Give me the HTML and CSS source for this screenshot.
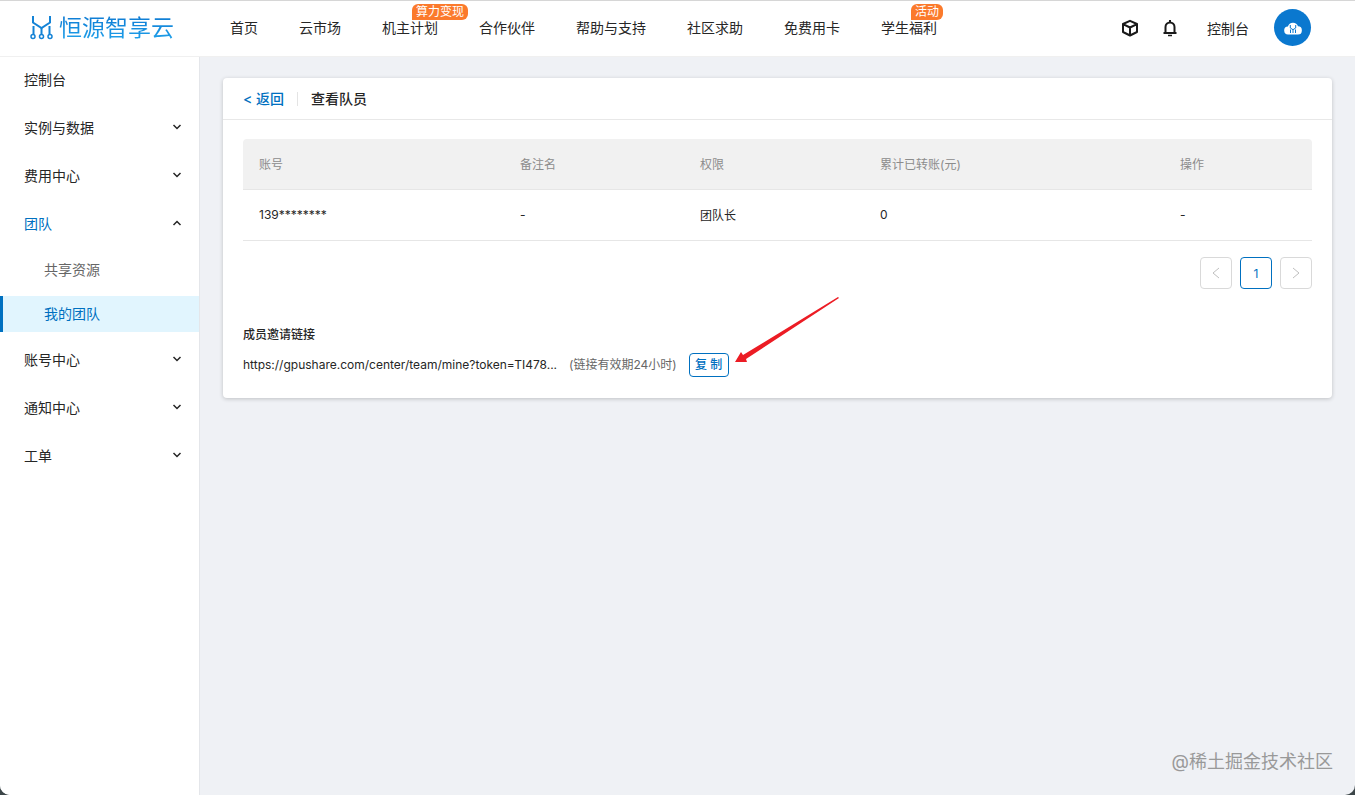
FILE: index.html
```html
<!DOCTYPE html>
<html lang="zh-CN">
<head>
    <meta charset="UTF-8">
    <title>恒源智享云</title>
    <link rel="stylesheet" href="styles.css">
</head>
<body>
<div id="app">
    <header class="header">
        <a class="logo" href="#">
            <svg width="23" height="25" viewBox="0 0 23 25" fill="none" stroke="#1483d6">
                <path d="M3 1v6.500l8.500 5.500L20 7.500V1" stroke-width="2"/>
                <path d="M3.500 11v8.500M19.500 11v8.500M11.500 13v6.500" stroke-width="2"/>
                <circle cx="3" cy="21.500" r="2" stroke-width="1.500" fill="#fff"/>
                <circle cx="11.500" cy="21.500" r="2" stroke-width="1.500" fill="#fff"/>
                <circle cx="20" cy="21.500" r="2" stroke-width="1.500" fill="#fff"/>
            </svg>
            <span>恒源智享云</span>
        </a>
        <nav class="nav">
            <a href="#">首页</a>
            <a href="#">云市场</a>
            <a href="#">机主计划<span class="tag">算力变现</span></a>
            <a href="#">合作伙伴</a>
            <a href="#">帮助与支持</a>
            <a href="#">社区求助</a>
            <a href="#">免费用卡</a>
            <a href="#">学生福利<span class="tag">活动</span></a>
        </nav>
        <div class="tools">
            <button class="icon" aria-label="容器">
                <svg width="18" height="18" viewBox="0 0 18 18" fill="none" stroke="#1a1a1a" stroke-width="2" stroke-linejoin="round">
                    <path d="M9 1.800L16 5v8l-7 3.500L2 13V5zM2.500 5.300L9 8.500l6.500-3.200M9 8.500v7.500"/>
                </svg>
            </button>
            <button class="icon" aria-label="通知">
                <svg width="18" height="18" viewBox="0 0 18 18" fill="none" stroke="#1a1a1a" stroke-width="2">
                    <path d="M4.500 14V8a4.500 4.500 0 0 1 9 0v6M2.500 14h13M9 1v3"/>
                    <path d="M7 16.500h4" stroke-width="1.500"/>
                </svg>
            </button>
            <a class="console" href="#">控制台</a>
            <a class="avatar" href="#" aria-label="用户">
                <svg width="18" height="14" viewBox="0 0 18 14">
                    <path d="M4.500 13.500a4 4 0 0 1-.6-8A5.300 5.300 0 0 1 14 5.300a4.100 4.100 0 0 1-.5 8.200z" fill="#fff"/>
                    <path d="M6.300 4v3L9 8.700 11.700 7V4M9 8.700V12M6.500 8.500V12M11.500 8.500V12" fill="none" stroke="#0a78cf" stroke-width="1"/>
                </svg>
            </a>
        </div>
    </header>
    <div class="body">
        <aside class="side">
            <ul class="menu">
                <li><a href="#">控制台</a></li>
                <li><a href="#">实例与数据<svg class="arr" viewBox="0 0 10 6"><path d="M1.500 1L5 4.500 8.500 1"/></svg></a></li>
                <li><a href="#">费用中心<svg class="arr" viewBox="0 0 10 6"><path d="M1.500 1L5 4.500 8.500 1"/></svg></a></li>
                <li>
                    <a class="open" href="#">团队<svg class="arr" viewBox="0 0 10 6"><path d="M1.500 5L5 1.500 8.500 5"/></svg></a>
                    <ul class="sub">
                        <li><a href="#">共享资源</a></li>
                        <li><a class="selected" href="#">我的团队</a></li>
                    </ul>
                </li>
                <li><a href="#">账号中心<svg class="arr" viewBox="0 0 10 6"><path d="M1.500 1L5 4.500 8.500 1"/></svg></a></li>
                <li><a href="#">通知中心<svg class="arr" viewBox="0 0 10 6"><path d="M1.500 1L5 4.500 8.500 1"/></svg></a></li>
                <li><a href="#">工单<svg class="arr" viewBox="0 0 10 6"><path d="M1.500 1L5 4.500 8.500 1"/></svg></a></li>
            </ul>
        </aside>
        <main class="main">
            <section class="card">
                <div class="card-head">
                    <a href="#">&lt; 返回</a>
                    <h1>查看队员</h1>
                </div>
                <div class="card-body">
                    <table class="table">
                        <colgroup>
                            <col class="c-account">
                            <col class="c-note">
                            <col class="c-role">
                            <col class="c-sum">
                            <col>
                        </colgroup>
                        <thead>
                        <tr>
                            <th>账号</th>
                            <th>备注名</th>
                            <th>权限</th>
                            <th>累计已转账(元)</th>
                            <th>操作</th>
                        </tr>
                        </thead>
                        <tbody>
                        <tr>
                            <td>139********</td>
                            <td>-</td>
                            <td>团队长</td>
                            <td>0</td>
                            <td>-</td>
                        </tr>
                        </tbody>
                    </table>
                    <div class="pager">
                        <button disabled aria-label="上一页"><svg width="10" height="12" viewBox="0 0 10 12"><path d="M8 1L2 6l6 5"/></svg></button>
                        <button class="current">1</button>
                        <button disabled aria-label="下一页"><svg width="10" height="12" viewBox="0 0 10 12"><path d="M2 1l6 5-6 5"/></svg></button>
                    </div>
                    <h2>成员邀请链接</h2>
                    <div class="invite">
                        <span class="url">https://gpushare.com/center/team/mine?token=TI478...</span>
                        <span class="tip">(链接有效期24小时)</span>
                        <div class="copy">
                            <button>复 制</button>
                            <svg class="pointer" width="104" height="66" viewBox="0 0 104 66"><path d="M0 65L6 55l2 3L103 0l1 1L11 62l1 3z" fill="#ec1c24"/></svg>
                        </div>
                    </div>
                </div>
            </section>
        </main>
    </div>
    <div class="mark">@稀土掘金技术社区</div>
</div>
</body>
</html>
```

FILE: styles.css
```css
*{
    margin: 0;
    padding: 0;
    box-sizing: border-box;
}
body{
    background: #3c4648;
    font-family: Inter, "Noto Sans CJK SC", sans-serif;
    font-size: 14px;
    color: #262626;
}
a{
    color: inherit;
    text-decoration: none;
}
ul{
    list-style: none;
}
button{
    font: inherit;
    cursor: pointer;
}
#app{
    position: relative;
    display: flex;
    flex-direction: column;
    min-height: 100vh;
    border-radius: 0 0 10px 10px;
    overflow: hidden;
    background: #eff1f5;
}

/* header */
.header{
    display: flex;
    align-items: center;
    height: 56px;
    padding: 0 44px 2px 30px;
    background: #fff;
    border-top: 1px solid #d6d6d6;
    box-shadow: 0 1px 0 #f0f0f0;
    z-index: 1;
}
.logo{
    display: flex;
    align-items: center;
    gap: 6px;
    width: 200px;
}
.logo span{
    font-size: 23px;
    line-height: 32px;
    background: linear-gradient(#0b74cf, #22a7ee);
    -webkit-background-clip: text;
    background-clip: text;
    color: transparent;
}
.nav{
    display: flex;
    flex: 1;
    gap: 41px;
    white-space: nowrap;
}
.nav a{
    position: relative;
    line-height: 24px;
}
.tag{
    position: absolute;
    left: 30px;
    top: -12px;
    padding: 0 4px;
    border-radius: 6px 6px 6px 0;
    background: #fb7a2c;
    color: #fff;
    font-size: 12px;
    line-height: 16px;
}
.tools{
    display: flex;
    align-items: center;
}
.icon{
    display: flex;
    margin-right: 22px;
    border: 0;
    background: none;
}
.console{
    margin: 0 25px 0 6px;
}
.avatar{
    display: flex;
    align-items: center;
    justify-content: center;
    width: 37px;
    height: 37px;
    border-radius: 50%;
    background: #0a78cf;
}

/* side menu */
.body{
    display: flex;
    flex: 1;
}
.side{
    flex: none;
    width: 200px;
    background: #fff;
    border-right: 1px solid #e4e6ea;
}
.menu a{
    display: flex;
    align-items: center;
    justify-content: space-between;
    height: 48px;
    padding: 0 17px 2px 24px;
}
.menu .open{
    color: #0070c0;
}
.arr{
    width: 10px;
    height: 6px;
    fill: none;
    stroke: #262626;
    stroke-width: 1.5;
}
.sub li{
    padding: 4px 0;
}
.menu .sub a{
    height: 36px;
    padding-left: 44px;
    color: #666;
}
.menu .sub .selected{
    padding-left: 41px;
    border-left: 3px solid #0070c0;
    background: #e1f5fe;
    color: #0070c0;
}

/* content */
.main{
    flex: 1;
    padding: 22px 23px;
}
.card{
    background: #fff;
    border-radius: 4px;
    box-shadow: 0 1px 4px rgba(0, 0, 0, 0.2);
}
.card-head{
    display: flex;
    align-items: center;
    height: 42px;
    padding: 0 20px;
    border-bottom: 1px solid #e8e8e8;
}
.card-head a{
    padding-right: 13px;
    color: #0070c0;
    font-weight: 500;
    line-height: 14px;
    border-right: 1px solid #e4e4e4;
}
.card-head h1{
    padding-left: 13px;
    font-size: 14px;
    font-weight: 500;
    line-height: 14px;
}
.card-body{
    padding: 19px 20px 21px;
}
.table{
    width: 100%;
    table-layout: fixed;
    border-collapse: separate;
    border-spacing: 0;
    font-size: 12px;
}
.c-account{
    width: 261px;
}
.c-note, .c-role{
    width: 180px;
}
.c-sum{
    width: 300px;
}
.table th, .table td{
    height: 51px;
    padding: 0 16px 2px;
    text-align: left;
    border-bottom: 1px solid #e6e6e6;
}
.table th{
    background: #f1f1f1;
    color: #8c8c8c;
    font-weight: 400;
}
.table th:first-child{
    border-top-left-radius: 4px;
}
.table th:last-child{
    border-top-right-radius: 4px;
}
.pager{
    display: flex;
    justify-content: flex-end;
    gap: 8px;
    margin-top: 16px;
}
.pager button{
    display: flex;
    align-items: center;
    justify-content: center;
    width: 32px;
    height: 32px;
    border: 1px solid #d9d9d9;
    border-radius: 4px;
    background: #fff;
    font-size: 12px;
}
.pager .current{
    border-color: #0070c0;
    color: #0070c0;
}
.pager svg{
    fill: none;
    stroke: #bfbfbf;
}
.card h2{
    margin-top: 36px;
    font-size: 12px;
    font-weight: 500;
    line-height: 20px;
}
.invite{
    display: flex;
    align-items: center;
    margin-top: 8px;
    font-size: 12px;
    line-height: 16px;
}
.tip{
    margin: 0 12px;
    color: #666;
}
.copy{
    position: relative;
}
.copy button{
    display: block;
    width: 40px;
    height: 24px;
    border: 1px solid #0070c0;
    border-radius: 4px;
    background: #fff;
    color: #0070c0;
    font-weight: 500;
    line-height: 16px;
}
.pointer{
    position: absolute;
    left: 46px;
    bottom: 14px;
}
.mark{
    position: absolute;
    right: 22px;
    bottom: 20px;
    color: #999;
    font-size: 18px;
    line-height: 26px;
}
```
